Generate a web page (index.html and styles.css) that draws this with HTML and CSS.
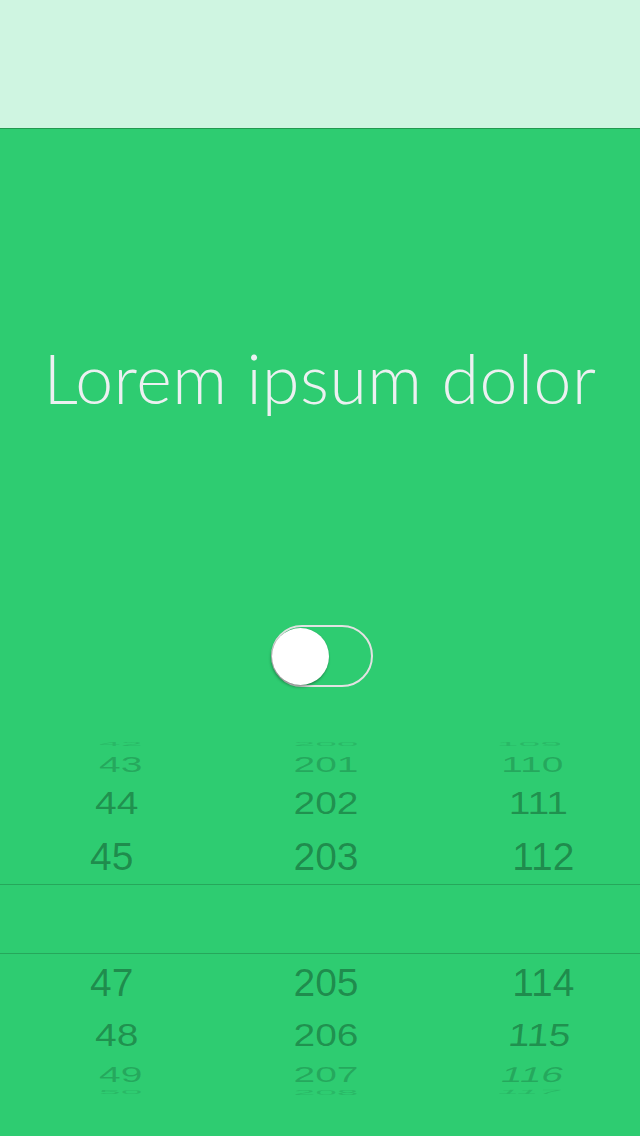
FILE: index.html
```html
<!DOCTYPE html>
<html lang="en">
<head>
<meta charset="utf-8">
<title>Lorem ipsum dolor</title>
<link rel="stylesheet" href="styles.css">
</head>
<body>
<header class="topbar"></header>
<main class="content">
  <h1 class="title">Lorem ipsum dolor</h1>
  <div class="switch" role="switch" aria-checked="false">
    <span class="knob"></span>
  </div>
  <section class="picker">
    <div class="wheel upper">
      <div class="cell c1 r0">42</div><div class="cell c2 r0">200</div><div class="cell c3 r0">109</div>
      <div class="cell c1 r1">43</div><div class="cell c2 r1">201</div><div class="cell c3 r1">110</div>
      <div class="cell c1 r2">44</div><div class="cell c2 r2">202</div><div class="cell c3 r2">111</div>
      <div class="cell c1 r3">45</div><div class="cell c2 r3">203</div><div class="cell c3 r3">112</div>
    </div>
    <div class="band"></div>
    <div class="wheel lower">
      <div class="cell c1 r4">47</div><div class="cell c2 r4">205</div><div class="cell c3 r4">114</div>
      <div class="cell c1 r5">48</div><div class="cell c2 r5">206</div><div class="cell c3 r5">115</div>
      <div class="cell c1 r6">49</div><div class="cell c2 r6">207</div><div class="cell c3 r6">116</div>
      <div class="cell c1 r7">50</div><div class="cell c2 r7">208</div><div class="cell c3 r7">117</div>
    </div>
  </section>
</main>
</body>
</html>
```

FILE: styles.css
```css
* { box-sizing: border-box; }

html, body {
  margin: 0;
  padding: 0;
}

body {
  width: 640px;
  height: 1136px;
  overflow: hidden;
  background: #2ecc71;
  font-family: "Liberation Sans", Arial, sans-serif;
}

.topbar {
  height: 129px;
  background: #cff5e1;
  border-bottom: 1px solid #23994f;
}

.content {
  display: flex;
  flex-direction: column;
  align-items: center;
}

.title {
  margin: 209px 0 0 0;
  height: 80px;
  line-height: 80px;
  font-family: Lato, "Open Sans", sans-serif;
  font-weight: 300;
  font-size: 68px;
  letter-spacing: 0.5px;
  color: #ecf0f1;
  text-align: center;
  white-space: nowrap;
}

.switch {
  margin-top: 207px;
  margin-left: 4px;
  width: 102px;
  height: 62px;
  border: 2px solid #e2e2e2;
  border-radius: 31px;
  display: flex;
  align-items: center;
}

.knob {
  width: 57px;
  height: 57px;
  border-radius: 50%;
  background: #ffffff;
  margin-left: -1px;
  box-shadow: -1px 2px 3px rgba(0, 0, 0, 0.35), 0 0 1px rgba(0, 0, 0, 0.2);
}

.picker {
  margin-top: 50px;
  width: 640px;
  display: flex;
  flex-direction: column;
}

.wheel {
  display: grid;
  grid-template-columns: 1fr 1fr 1fr;
  padding-left: 12px;
}

.upper { grid-template-rows: 14px 26px 52px 55px; }
.lower { grid-template-rows: 56px 50px 28px 8px; }

.band {
  height: 70px;
  border-top: 1px solid #26a75b;
  border-bottom: 1px solid #26a75b;
}

.cell {
  display: flex;
  align-items: center;
  justify-content: center;
  font-size: 39px;
  line-height: 1;
  color: rgba(0, 0, 0, 0.32);
  white-space: nowrap;
}

.r0 { transform: scaleY(0.16); opacity: 0.3; }
.r1 { transform: scaleY(0.55); opacity: 0.55; }
.r2 { transform: scaleY(0.8); opacity: 0.92; }
.r3 { transform: scaleY(0.98); }
.r4 { transform: scaleY(1.0); }
.r5 { transform: scaleY(0.82); opacity: 0.92; }
.r6 { transform: scaleY(0.55); opacity: 0.55; }
.r7 { transform: scaleY(0.18); opacity: 0.3; }

.c1.r0, .c1.r7 { transform: translateX(4px) scaleY(0.16); }
.c1.r1, .c1.r6 { transform: translateX(4px) scaleY(0.55); }
.c1.r2, .c1.r5 { transform: translateX(0px) scaleY(0.8); }
.c1.r3 { transform: translateX(-5px) scaleY(0.98); }
.c1.r4 { transform: translateX(-5px) scaleY(1.0); }

.c3.r0 { transform: translateX(-6px) scaleY(0.16); }
.c3.r7 { transform: translateX(-6px) scaleY(0.16) skewX(-10deg); }
.c3.r1 { transform: translateX(-3px) scaleY(0.55); }
.c3.r6 { transform: translateX(-3px) scaleY(0.55) skewX(-10deg); }
.c3.r2 { transform: translateX(3px) scaleY(0.8); }
.c3.r5 { transform: translateX(4px) scaleY(0.82) skewX(-5deg); }
.c3.r3 { transform: translateX(8px) scaleY(0.98); }
.c3.r4 { transform: translateX(8px) scaleY(1.0); }
```
